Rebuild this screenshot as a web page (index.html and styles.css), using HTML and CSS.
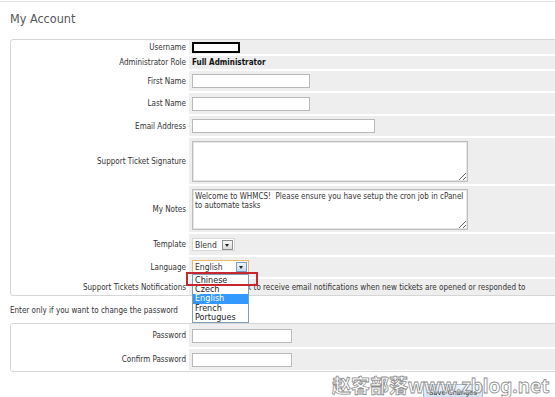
FILE: index.html
```html
<!DOCTYPE html>
<html>
<head>
<meta charset="utf-8">
<link rel="stylesheet" href="styles.css">
</head>
<body>
<div class="topline"></div>
<h1 class="title">My Account</h1>
<div class="panel">
  <div class="row h14"><div class="lab">Username</div><div class="fld"><span class="userbox"></span></div></div>
  <div class="row h13"><div class="lab">Administrator Role</div><div class="fld"><b class="role">Full Administrator</b></div></div>
  <div class="row h20"><div class="lab">First Name</div><div class="fld"><span class="input w118"></span></div></div>
  <div class="row h21"><div class="lab">Last Name</div><div class="fld"><span class="input w118"></span></div></div>
  <div class="row h20"><div class="lab">Email Address</div><div class="fld"><span class="input w183"></span></div></div>
  <div class="row h46"><div class="lab">Support Ticket Signature</div><div class="fld"><textarea class="area"></textarea></div></div>
  <div class="row h46"><div class="lab">My Notes</div><div class="fld"><textarea class="area">Welcome to WHMCS!  Please ensure you have setup the cron job in cPanel
to automate tasks</textarea></div></div>
  <div class="row h21"><div class="lab">Template</div><div class="fld"><span class="select tpl"><span class="val">Blend</span><span class="btn"></span></span></div></div>
  <div class="row h20"><div class="lab">Language</div><div class="fld">
    <span class="select lang"><span class="val">English</span><span class="btn blue"></span>
      <span class="list">
        <span class="opt">Chinese</span>
        <span class="opt">Czech</span>
        <span class="opt sel">English</span>
        <span class="opt">French</span>
        <span class="opt">Portugues</span>
      </span>
      <span class="mark"></span>
    </span>
  </div></div>
  <div class="row h16 last"><div class="lab">Support Tickets Notifications</div><div class="fld"><span class="check"></span><span class="notif">Tick to receive email notifications when new tickets are opened or responded to</span></div></div>
</div>
<p class="note">Enter only if you want to change the password</p>
<div class="panel panel2">
  <div class="row h23"><div class="lab">Password</div><div class="fld"><span class="input w100"></span></div></div>
  <div class="row h21 last"><div class="lab">Confirm Password</div><div class="fld"><span class="input w100"></span></div></div>
</div>
<div class="actions"><button class="save">Save Changes</button></div>
<div class="watermark"><span class="wm-cn">赵客部落</span><span class="wm-en">www.zblog.net</span></div>
</body>
</html>
```
FILE: styles.css
```css
html { overflow: hidden; }
body {
  margin: 0;
  width: 555px;
  height: 397px;
  position: relative;
  background: #fff;
  font-family: "DejaVu Sans Condensed", "DejaVu Sans", sans-serif;
  font-size: 8px;
  color: #333;
}
.topline {
  margin-top: 1px;
  border-top: 1px solid #e4e4e4;
}
.title {
  margin: 9px 0 12px 10px;
  font-size: 12.5px;
  line-height: 16px;
  font-weight: normal;
  color: #555;
}
.panel {
  margin-left: 10px;
  width: 600px;
  border: 1px solid #d6d6d6;
  border-radius: 3px;
  background: #fff;
}
.row {
  display: flex;
  margin-bottom: 2px;
}
.row.last { margin-bottom: 0; }
.h13 { height: 13px; }
.h14 { height: 14px; }
.h16 { height: 16px; }
.h20 { height: 20px; }
.h21 { height: 21px; }
.h23 { height: 23px; }
.h46 { height: 46px; }
.lab {
  box-sizing: border-box;
  width: 178px;
  padding-right: 3px;
  display: flex;
  align-items: center;
  justify-content: flex-end;
  white-space: nowrap;
}
.fld {
  flex: 1;
  background: #eeeeee;
  display: flex;
  align-items: center;
  padding-left: 3px;
  white-space: nowrap;
}
.userbox {
  box-sizing: border-box;
  width: 48px;
  height: 11px;
  border: 2px solid #000;
  background: #fff;
}
.role { color: #111; font-weight: bold; }
.input {
  box-sizing: border-box;
  height: 14px;
  border: 1px solid #b9b9b9;
  background: #fff;
}
.w118 { width: 118px; }
.w183 { width: 183px; }
.w100 { width: 100px; }
.area {
  box-sizing: border-box;
  width: 276px;
  height: 41px;
  margin: 0;
  padding: 2px 2px;
  border: 1px solid #bdbdbd;
  box-shadow: inset 0 0 0 1px #e6e6e6;
  background: #fff;
  font-family: inherit;
  font-size: 8px;
  line-height: 9.5px;
  color: #333;
  resize: both;
  overflow: hidden;
  white-space: pre;
}
.select {
  position: relative;
  box-sizing: border-box;
  display: inline-flex;
  align-items: center;
  height: 13px;
  border: 1px solid #d8d8d8;
  background: #fff;
  padding-left: 2px;
  font-size: 8.5px;
}
.select .val { flex: 1; }
.tpl { width: 43px; }
.lang { width: 57px; height: 14px; border-color: #e9b96a; }
.btn {
  box-sizing: border-box;
  width: 11px;
  height: 10px;
  margin-right: 1px;
  border: 1px solid #8e8e8e;
  background: linear-gradient(#fafafa, #dcdcdc);
  position: relative;
}
.btn::after {
  content: "";
  position: absolute;
  left: 2px;
  top: 3px;
  border-left: 2.5px solid transparent;
  border-right: 2.5px solid transparent;
  border-top: 3px solid #222;
}
.btn.blue {
  border-color: #7a9cc4;
  background: linear-gradient(#eef4fb, #c9dbef);
}
.list {
  position: absolute;
  left: -1px;
  top: 13px;
  box-sizing: border-box;
  width: 57px;
  height: 49px;
  border: 1px solid #7f9db9;
  background: #fff;
  display: flex;
  flex-direction: column;
  padding-top: 0.5px;
  z-index: 2;
}
.opt {
  height: 9.4px;
  line-height: 9.4px;
  padding-left: 2px;
  font-size: 9px;
  color: #222;
}
.opt.sel { background: #3399ff; color: #fff; }
.mark {
  position: absolute;
  left: -7px;
  top: 11px;
  width: 68px;
  height: 10px;
  border: 2px solid #c8262e;
  z-index: 3;
}
.check {
  box-sizing: border-box;
  width: 10px;
  height: 10px;
  border: 1px solid #888;
  background: #fff;
  margin-left: 32px;
  margin-right: 3px;
}
.notif { font-size: 8px; }
.note {
  margin: 9px 0 6px 10px;
  line-height: 12px;
  font-size: 8px;
  color: #333;
}
.panel2 { padding-bottom: 1px; }
.actions {
  padding: 12px 0 0 423px;
}
.save {
  box-sizing: border-box;
  width: 60px;
  height: 16px;
  padding: 0;
  border: 1px solid #a8bcd2;
  border-radius: 3px;
  background: linear-gradient(#eef5fc, #cfe0f2);
  font-family: inherit;
  font-size: 7.5px;
  color: #333;
}
.watermark {
  position: absolute;
  left: 332px;
  top: 371px;
  display: flex;
  align-items: baseline;
  color: rgba(255, 255, 255, 0.55);
  -webkit-text-stroke: 0.8px #8c8c8c;
  font-weight: bold;
  white-space: nowrap;
}
.wm-cn {
  font-family: "Noto Sans CJK SC", sans-serif;
  font-size: 19px;
}
.wm-en {
  font-family: "Noto Sans", sans-serif;
  font-size: 19px;
}
```
